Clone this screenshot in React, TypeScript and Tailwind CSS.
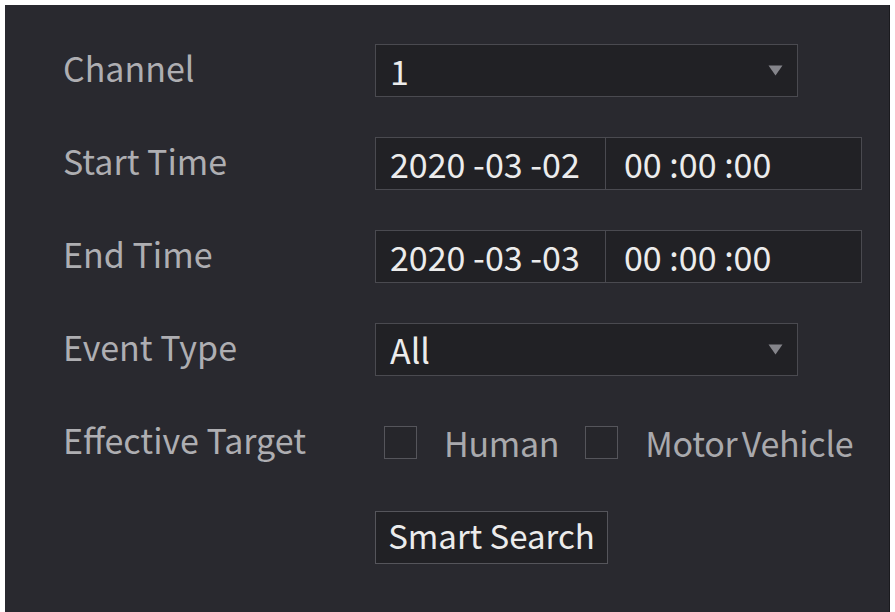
import React from 'react'

const FONT = { fontFamily: '"Noto Sans CJK SC", "Noto Sans", sans-serif' }

function Caret() {
  return (
    <svg width="15" height="11" viewBox="0 0 15 11" className="shrink-0">
      <path d="M0.5 0.5 H14.5 L7.5 10.5 Z" fill="#85858b" />
    </svg>
  )
}

function Select({ value }: { value: string }) {
  return (
    <div className="flex h-[53px] w-[423px] items-center justify-between border border-[#4a4a50] bg-[#212125] pl-[14px] pr-[14px]">
      <span className="text-[#ececec]">{value}</span>
      <Caret />
    </div>
  )
}

function DateTime({ date, time }: { date: string; time: string }) {
  return (
    <div className="flex h-[53px] w-[487px] items-stretch border border-[#4a4a50] bg-[#212125]">
      <div className="flex w-[230px] items-center border-r border-[#4a4a50] pl-[14px] text-[#ececec] whitespace-pre">
        {date}
      </div>
      <div className="flex flex-1 items-center pl-[18px] text-[#ececec] whitespace-pre">{time}</div>
    </div>
  )
}

function Checkbox({ label }: { label: string }) {
  return (
    <div className="flex items-center">
      <span className="block h-[33px] w-[33px] border border-[#55555b] bg-[#26262b]" />
      <span className="ml-[27px] text-[#a9a9ad] tracking-[-0.3px] [word-spacing:-3px]">{label}</span>
    </div>
  )
}

function Row({ label, children }: { label: string; children: React.ReactNode }) {
  return (
    <div className="flex h-[53px] items-center">
      <div className="w-[312px] shrink-0 pb-[6px] text-[#aeaeb2]">{label}</div>
      {children}
    </div>
  )
}

export default function App() {
  return (
    <div className="h-[612px] w-[895px] overflow-hidden bg-white pl-[5px] pt-[5px]" style={FONT}>
      <div className="h-full w-[885px] border-r border-[#1a1a1e] bg-[#29292f] pl-[58px] pt-[39px] text-[34px] leading-none">
        <div className="flex flex-col gap-[40px]">
          <Row label="Channel">
            <Select value="1" />
          </Row>
          <Row label="Start Time">
            <DateTime date="2020 -03 -02" time="00 :00 :00" />
          </Row>
          <Row label="End Time">
            <DateTime date="2020 -03 -03" time="00 :00 :00" />
          </Row>
          <Row label="Event Type">
            <Select value="All" />
          </Row>
          <Row label="Effective Target">
            <div className="flex items-center gap-[26px] pl-[9px]">
              <Checkbox label="Human" />
              <Checkbox label="Motor Vehicle" />
            </div>
          </Row>
          <Row label="">
            <button className="mt-[4px] flex h-[53px] w-[233px] items-center justify-center border border-[#55555b] bg-[#212125] pb-[4px] text-[33px] text-[#ececec]">
              Smart Search
            </button>
          </Row>
        </div>
      </div>
    </div>
  )
}
